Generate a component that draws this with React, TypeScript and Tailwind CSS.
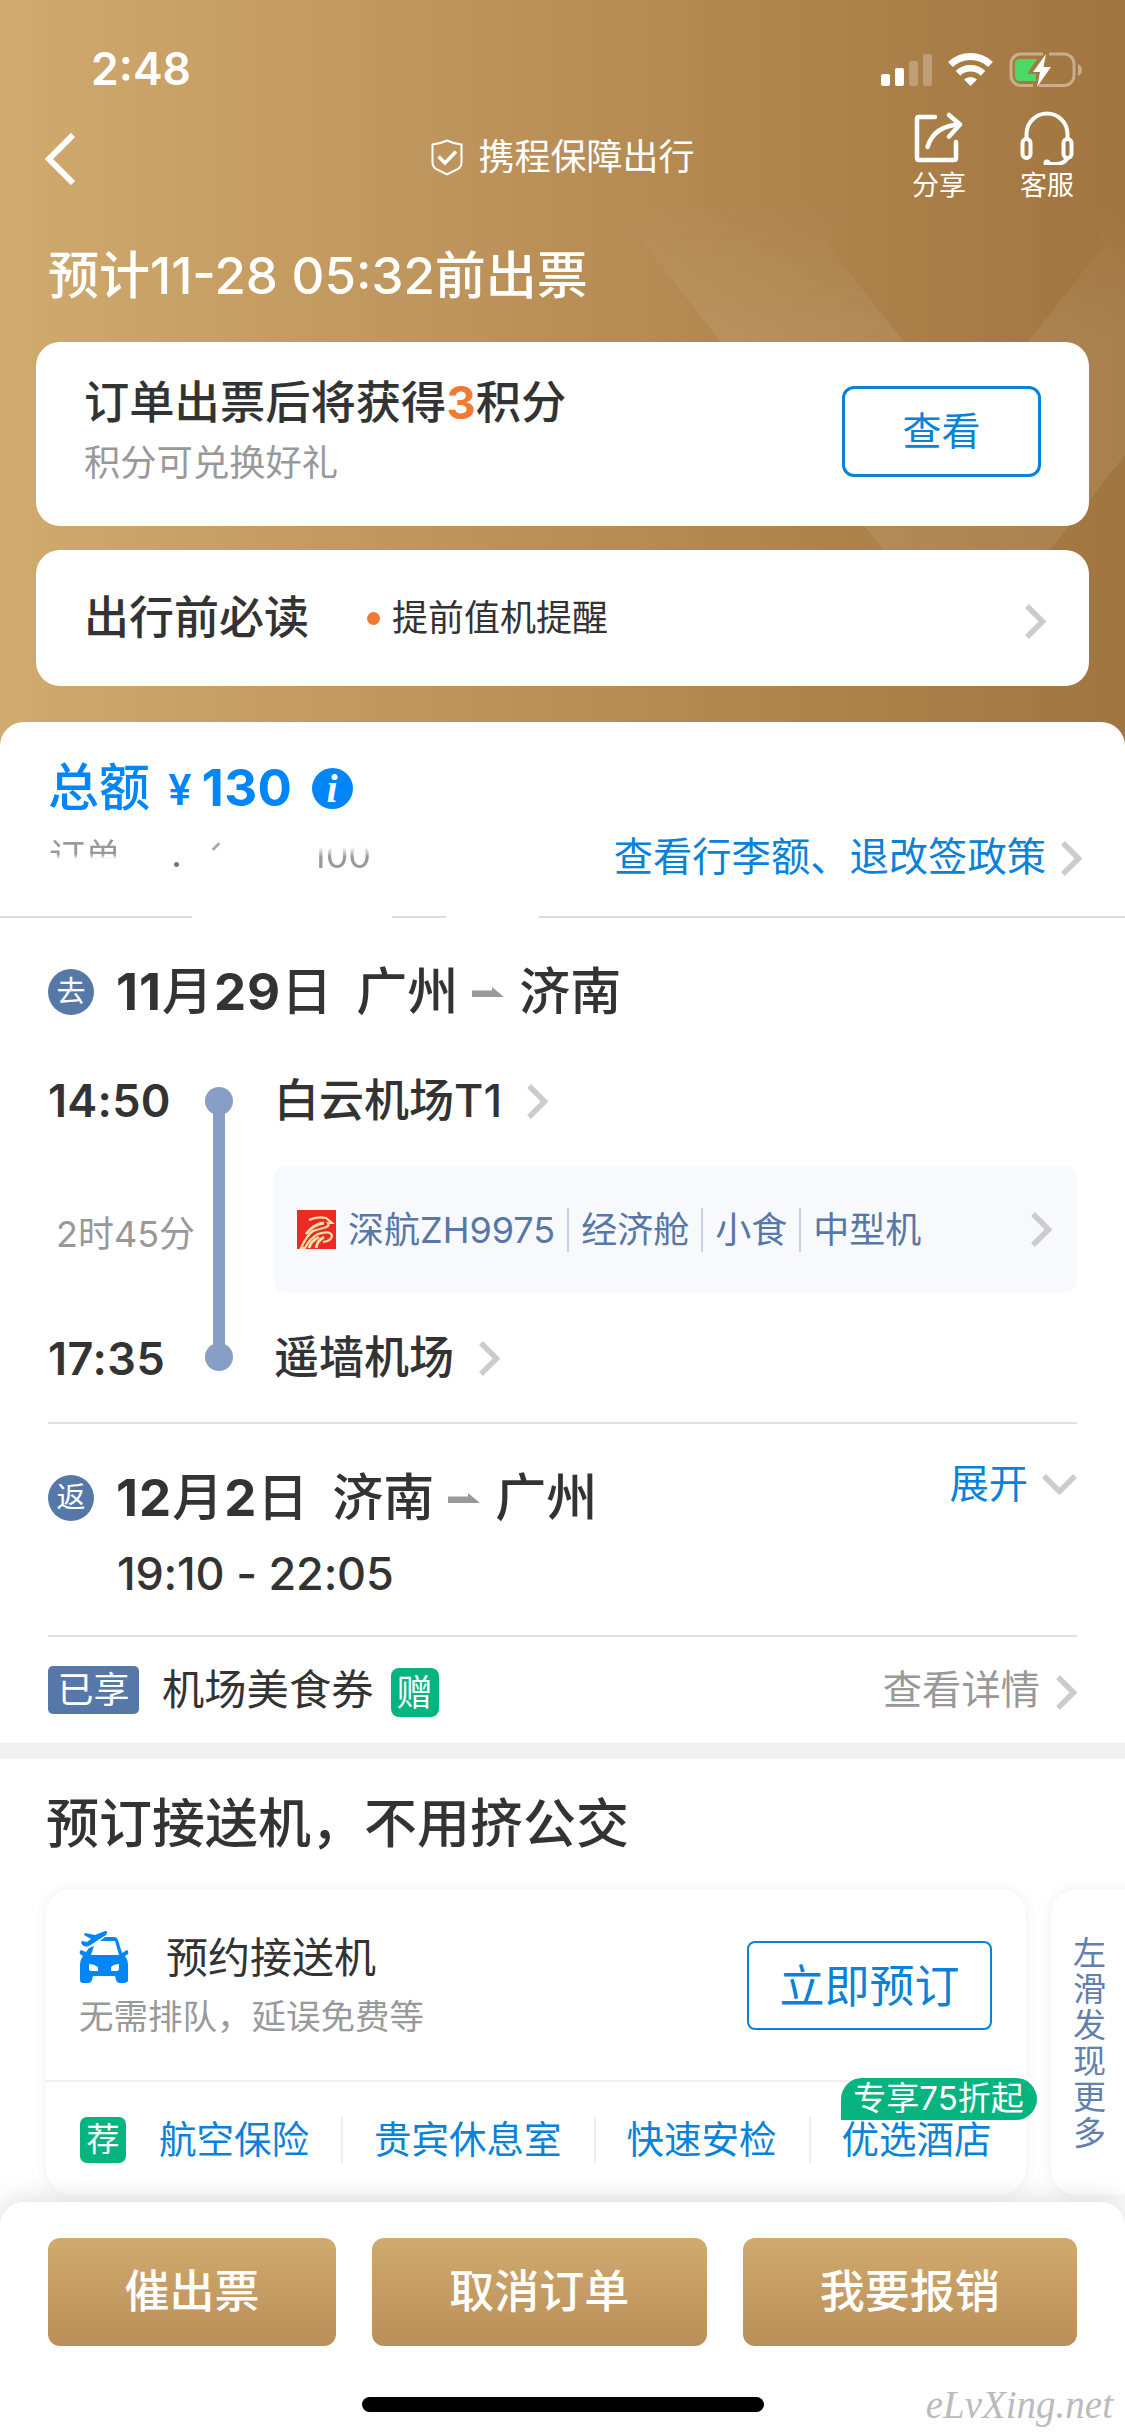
import { ReactNode } from 'react'
import clsx from 'clsx'

const Chevron = ({ className }: { className?: string }) => (
    <svg
        viewBox="0 0 21 35"
        className={clsx('h-[35px] w-[21px] shrink-0', className)}
        fill="none"
        stroke="#cccccc"
        strokeWidth="5.500"
    >
        <path d="M2 2L17.5 17.5L2 33" />
    </svg>
)

const RouteArrow = () => (
    <svg
        viewBox="0 0 32 10"
        className="h-[10px] w-[32px]"
        fill="#999999"
    >
        <path d="M0 3.5H20V0L32 10H0Z" />
    </svg>
)

const StatusBar = () => (
    <div className="flex h-[104px] items-start justify-between pt-[45px] pr-[42px] pl-[91px]">
        <span className="text-[44.500px] leading-[48px] font-semibold">2:48</span>
        <div className="flex items-center gap-[16px] pt-[7px]">
            <svg
                viewBox="0 0 51 34"
                className="h-[34px] w-[51px]"
                fill="white"
            >
                <rect x="0" y="21" width="9" height="12" rx="2" />
                <rect x="14" y="15" width="9" height="18" rx="2" />
                <rect x="28" y="8" width="9" height="25" rx="2" opacity="0.25" />
                <rect x="42" y="1" width="9" height="32" rx="2" opacity="0.25" />
            </svg>
            <svg
                viewBox="0 0 45 34"
                className="h-[34px] w-[45px]"
                fill="none"
                stroke="white"
                strokeWidth="7"
            >
                <path d="M2.5 11.5A29 29 0 0 1 42.500 11.500" />
                <path d="M10 20.300A18 18 0 0 1 35 20.300" strokeWidth="6.500" />
                <path
                    d="M22.500 33L16 26.500A9.500 9.500 0 0 1 29 26.500Z"
                    fill="white"
                    stroke="none"
                />
            </svg>
            <svg
                viewBox="0 0 74 36"
                className="h-[36px] w-[74px]"
                fill="none"
            >
                <path
                    d="M34 2H12A10 10 0 0 0 2 12V23A10 10 0 0 0 12 33.500H24M40 2H55A10 10 0 0 1 65 12V23A10 10 0 0 1 55 33.500H30"
                    stroke="white"
                    strokeOpacity="0.4"
                    strokeWidth="3"
                />
                <path
                    d="M69 12Q73 14 73 18T69 24Z"
                    fill="white"
                    fillOpacity="0.4"
                />
                <path
                    d="M11 7H28L18 22H27V29H11Q6 29 6 24V12Q6 7 11 7Z"
                    fill="#4cd964"
                />
                <path d="M37 2L24 20H31L28 35L42 15H34.500Z" fill="white" />
            </svg>
        </div>
    </div>
)

const NavBar = () => (
    <div className="flex h-[110px] items-start justify-between pr-[51px] pl-[44px]">
        <svg
            viewBox="0 0 32 52"
            className="mt-[29px] h-[52px] w-[32px]"
            fill="none"
            stroke="white"
            strokeWidth="6"
        >
            <path d="M29 2L5 26L29 50" />
        </svg>
        <div className="ml-[138px] flex h-[106px] items-center gap-[15px]">
            <svg
                viewBox="0 0 32 37"
                className="h-[37px] w-[32px]"
                fill="none"
                stroke="white"
                strokeWidth="2"
            >
                <path d="M16 1.500Q22 4.500 30.500 5.500V24Q30 28 27 30L16 35.500L5 30Q2 28 1.500 24V5.500Q10 4.500 16 1.500Z" />
                <path d="M7.500 17.500L14 24L25 12.500" strokeWidth="3.500" />
            </svg>
            <span className="text-[36px]">携程保障出行</span>
        </div>
        <div className="flex gap-[54px] pt-[7px] text-[27px] leading-[32px]">
            <div className="flex w-[54px] flex-col items-center gap-[5px]">
                <svg
                    viewBox="0 0 52 54"
                    className="h-[54px] w-[52px]"
                    fill="none"
                    stroke="white"
                    strokeWidth="4.500"
                    strokeLinecap="round"
                    strokeLinejoin="round"
                >
                    <path d="M22 6H6Q4 6 4 8V47Q4 49 6 49H41Q43 49 43 47V31" />
                    <path d="M14.500 36Q21 14.500 47 13.500M36 4L47 13.500L36 25.500" />
                </svg>
                <span>分享</span>
            </div>
            <div className="flex w-[54px] flex-col items-center gap-[5px]">
                <svg
                    viewBox="0 0 54 54"
                    className="h-[54px] w-[54px]"
                    fill="none"
                    stroke="white"
                    strokeWidth="4"
                    strokeLinecap="round"
                >
                    <path d="M6.500 28V23A20.500 20.500 0 0 1 47.500 23V28" />
                    <rect x="2.500" y="28" width="8" height="19" rx="4" />
                    <rect x="43.500" y="28" width="8" height="19" rx="4" />
                    <path d="M47.500 47Q44 53.500 34 53H28" />
                    <circle cx="27" cy="52" r="1.500" fill="white" />
                </svg>
                <span>客服</span>
            </div>
        </div>
    </div>
)

const OutlineButton = ({
    children,
    className
}: {
    children: ReactNode
    className?: string
}) => (
    <button
        className={clsx(
            'flex shrink-0 items-center justify-center border-[#0a82d8] text-[#0a82d8]',
            className
        )}
    >
        {children}
    </button>
)

const LegHeader = ({
    mark,
    date,
    from,
    to
}: {
    mark: string
    date: string[]
    from: string
    to: string
}) => (
    <div className="flex h-[60px] items-center text-[51px] leading-[60px] font-medium">
        <span className="mr-[22px] flex h-[46px] w-[46px] items-center justify-center rounded-full bg-[#5678a8] text-[29px] font-normal text-white">
            {mark}
        </span>
        <span className="mr-[23px] tracking-[1px] whitespace-nowrap">
            <b className="font-bold">{date[0]}</b>月
            <b className="font-bold">{date[1]}</b>日
        </span>
        <span className="mr-[14px]">{from}</span>
        <RouteArrow />
        <span className="ml-[15px]">{to}</span>
    </div>
)

const AirlineLogo = () => (
    <svg
        viewBox="0 0 39 39"
        className="h-[39px] w-[39px] shrink-0"
    >
        <rect width="39" height="39" fill="#ea2a23" />
        <path
            d="M12 10Q20 6 29 8L35 13L31 13Q33 17 26 18L16 21Q10 25 4 38H8Q13 28 21 24Q34 20 35 26Q34 31 26 32"
            fill="none"
            stroke="#f8dfa8"
            strokeWidth="2.200"
        />
        <path
            d="M27 13Q17 14 9 24M12 38Q14 31 22 27M19 38Q20 31 27 27"
            fill="none"
            stroke="#f8dfa8"
            strokeWidth="2.800"
        />
    </svg>
)

const CarIcon = () => (
    <svg
        viewBox="0 0 50 52"
        className="h-[52px] w-[50px]"
        fill="#0086f6"
    >
        <path
            fillRule="evenodd"
            d="M26 6H35Q38 6 39 9L43 22L48 19Q50 20 49 23L46 25Q49 29 49 33V50Q48 52 45 52H40Q38 52 37 49L36 45H14L13 49Q12 52 9 52H4Q1 52 1 49V33Q1 29 4 25L1 23Q0 20 2 19L7 21L10 17L15 15L12 24H40L36 10H21ZM10 33V38Q10 40 13 40H19V36Q15 33 10 33ZM40 33Q35 33 32 36V40H38Q40 40 40 37Z"
        />
        <path d="M6 2L16 4L26 0Q30 0 27 4L10 15Q5 17 2 12L3 10L8 11L12 8L5 4Z" />
    </svg>
)

const recommends = ['航空保险', '贵宾休息室', '快速安检', '优选酒店']

const flightInfo = ['深航ZH9975', '经济舱', '小食', '中型机']

const App = () => {
    return (
        <div className="flex h-[2436px] w-[1125px] flex-col overflow-hidden bg-[linear-gradient(to_right,#d0aa6e_0%,#b98f57_50%,#a0753f_100%)] font-[Inter,'Noto_Sans_CJK_SC',sans-serif] text-[#333333]">
            <header className="relative h-[722px] shrink-0 text-white">
                <svg
                    viewBox="0 0 1125 722"
                    className="absolute inset-0 h-[722px] w-[1125px]"
                >
                    <defs>
                        <linearGradient
                            id="fade"
                            gradientUnits="userSpaceOnUse"
                            x1="0"
                            y1="200"
                            x2="0"
                            y2="340"
                        >
                            <stop offset="0" stopColor="#fff" stopOpacity="0" />
                            <stop offset="1" stopColor="#fff" stopOpacity="0.08" />
                        </linearGradient>
                    </defs>
                    <path
                        d="M610 200H842L829 247L966 421L1104 245L1090 200H1125V455L966 656Z"
                        fill="url(#fade)"
                    />
                </svg>
                <div className="relative">
                    <StatusBar />
                    <NavBar />
                    <h1 className="flex h-[128px] items-center pb-[3px] pl-[48px] text-[51px] font-medium">
                        预计11-28 05:32前出票
                    </h1>
                    <div className="flex flex-col gap-[24px] px-[36px] text-[#333333]">
                        <section className="flex h-[184px] items-start justify-between rounded-[24px] bg-white pr-[48px] pl-[48px]">
                            <div className="pt-[31px]">
                                <h2 className="text-[45.300px] leading-[60px] font-medium">
                                    订单出票后将获得
                                    <b className="font-bold text-[#f27931]">3</b>
                                    积分
                                </h2>
                                <p className="text-[36.300px] leading-[60px] text-[#999999]">
                                    积分可兑换好礼
                                </p>
                            </div>
                            <OutlineButton className="mt-[44px] h-[91px] w-[199px] rounded-[12px] border-[3px] text-[39px]">
                                查看
                            </OutlineButton>
                        </section>
                        <section className="flex h-[136px] items-center rounded-[24px] bg-white pr-[43px] pl-[48px]">
                            <h2 className="text-[45px] font-medium">出行前必读</h2>
                            <span className="mr-[12px] ml-[58px] h-[13px] w-[13px] rounded-full bg-[#f27931]" />
                            <span className="text-[36px]">提前值机提醒</span>
                            <Chevron className="mt-[6px] ml-auto" />
                        </section>
                    </div>
                </div>
            </header>

            <main className="h-[1504px] shrink-0 overflow-hidden rounded-t-[24px] bg-white">
                <section className="h-[195px] pt-[36px]">
                    <div className="flex h-[60px] items-center pl-[48px] text-[51px] leading-[60px] font-medium text-[#0086f6]">
                        总额
                        <span className="mt-[4px] ml-[18px] text-[42px] font-semibold">
                            ¥
                        </span>
                        <span className="ml-[10px] tracking-[0.5px] font-bold">
                            130
                        </span>
                        <span className="ml-[19px] flex h-[41px] w-[41px] items-center justify-center rounded-full bg-[#0086f6] font-['Liberation_Serif',serif] text-[40px] leading-[41px] font-bold text-white italic">
                            i
                        </span>
                    </div>
                    <div className="flex h-[76px] items-start justify-between pr-[43px] pl-[49px]">
                        {/* order number, mostly rubbed out */}
                        <div className="flex text-[36px] leading-[40px] text-[#999999]">
                            <span className="mt-[19px] h-[40px] [mask-image:linear-gradient(black_17px,transparent_22px)]">
                                订单
                            </span>
                            <i className="mt-[44px] ml-[53px] h-[5px] w-[5px] rounded-full bg-[#777777]" />
                            <i className="mt-[27px] ml-[32px] h-[3px] w-[10px] -rotate-45 rounded-full bg-[#aaaaaa]" />
                            <span className="mt-[17px] ml-[90px] h-[40px] [mask-image:linear-gradient(transparent_12px,black_22px)]">
                                100
                            </span>
                        </div>
                        <div className="flex items-center pt-[14px] text-[39.300px] leading-[50px] text-[#0a82d8]">
                            查看行李额、退改签政策
                            <Chevron className="mt-[2px] ml-[15px]" />
                        </div>
                    </div>
                    <div className="mt-[22px] flex h-[2px]">
                        <i className="w-[192px] bg-[#dddddd]" />
                        <i className="ml-[200px] w-[54px] bg-[#dddddd]" />
                        <i className="ml-[93px] flex-1 bg-[#dddddd]" />
                    </div>
                </section>

                <div className="px-[48px]">
                    <section className="h-[507px] border-b-2 border-[#e0e0e0] pt-[45px]">
                        <LegHeader
                            mark="去"
                            date={['11', '29']}
                            from="广州"
                            to="济南"
                        />
                        <div className="mt-[49px] flex h-[318px]">
                            <div className="flex w-[144px] flex-col justify-between text-[45px] leading-[60px] font-semibold">
                                <span className="tracking-[0.3px]">14:50</span>
                                <span className="mt-[7px] ml-[8px] text-[36px] font-normal whitespace-nowrap text-[#999999]">
                                    2时45分
                                </span>
                                <span className="tracking-[0.5px]">17:35</span>
                            </div>
                            <div className="mt-[16px] ml-[13px] flex h-[284px] w-[28px] flex-col items-center">
                                <i className="h-[28px] w-[28px] shrink-0 rounded-full bg-[#879fc6]" />
                                <i className="-my-[4px] w-[12px] flex-1 bg-[#879fc6]" />
                                <i className="h-[28px] w-[28px] shrink-0 rounded-full bg-[#879fc6]" />
                            </div>
                            <div className="ml-[41px] flex flex-1 flex-col text-[45px] leading-[60px] font-medium">
                                <div className="flex items-center gap-[25px]">
                                    白云机场T1
                                    <Chevron />
                                </div>
                                <div className="mt-[35px] flex h-[127px] items-center rounded-[12px] bg-[#f8f9fd] pr-[25px] pl-[23px] text-[36px] font-normal text-[#5678a8]">
                                    <AirlineLogo />
                                    {flightInfo.map((item, index) => (
                                        <span
                                            key={item}
                                            className={clsx(
                                                'flex h-[44px] items-center whitespace-nowrap',
                                                index > 0 &&
                                                    'border-l-2 border-[#c9d3e3]',
                                                'px-[12px]'
                                            )}
                                        >
                                            {item}
                                        </span>
                                    ))}
                                    <Chevron className="ml-auto" />
                                </div>
                                <div className="mt-[35px] flex items-center gap-[25px]">
                                    遥墙机场
                                    <Chevron />
                                </div>
                            </div>
                        </div>
                    </section>

                    <section className="flex h-[213px] items-start justify-between border-b-2 border-[#e0e0e0]">
                        <div className="pt-[44px]">
                            <LegHeader
                                mark="返"
                                date={['12', '2']}
                                from="济南"
                                to="广州"
                            />
                            <p className="mt-[16px] ml-[69px] text-[45px] leading-[60px] font-medium tracking-[-0.200px]">
                                19:10 - 22:05
                            </p>
                        </div>
                        <div className="flex items-center gap-[14px] pt-[34px] text-[39.300px] leading-[52px] text-[#0a82d8]">
                            展开
                            <Chevron className="mx-[7px] rotate-90" />
                        </div>
                    </section>

                    <section className="flex h-[106px] items-center">
                        <span className="flex h-[48px] w-[91px] items-center justify-center rounded-[5px] bg-[#5678a8] text-[36px] text-white">
                            已享
                        </span>
                        <span className="ml-[23px] text-[42.300px]">机场美食券</span>
                        <span className="mt-[5px] ml-[17px] flex h-[49px] w-[48px] items-center justify-center rounded-[8px] bg-[#06b47f] text-[36px] text-white">
                            赠
                        </span>
                        <span className="ml-auto text-[39.300px] text-[#999999]">
                            查看详情
                        </span>
                        <Chevron className="mt-[4px] ml-[16px]" />
                    </section>
                </div>

                <div className="h-[16px] bg-[#f0f0f0]" />

                <section className="pt-[33px] pl-[46px]">
                    <h2 className="text-[53px] leading-[64px] font-medium">
                        预订接送机，不用挤公交
                    </h2>
                    <div className="mt-[33px] flex h-[306px] gap-[25px]">
                        <div className="flex w-[980px] shrink-0 flex-col rounded-[26px] bg-white shadow-[0_0_14px_rgba(0,0,0,0.07)]">
                            <div className="flex h-[193px] items-start justify-between border-b-2 border-[#f0f0f0] pr-[34px] pl-[33px]">
                                <div className="pt-[38px]">
                                    <div className="flex h-[60px] items-center gap-[37px] text-[42px]">
                                        <CarIcon />
                                        预约接送机
                                    </div>
                                    <p className="text-[34.500px] leading-[60px] text-[#999999]">
                                        无需排队，延误免费等
                                    </p>
                                </div>
                                <OutlineButton className="mt-[52px] h-[89px] w-[245px] rounded-[8px] border-2 pt-[2px] text-[45px]">
                                    立即预订
                                </OutlineButton>
                            </div>
                            <div className="flex h-[113px] items-center pt-[3px] pl-[34px] text-[37.500px] text-[#0a82d8]">
                                <span className="flex h-[46px] w-[46px] items-center justify-center rounded-[7px] bg-[#06b47f] text-[33px] text-white">
                                    荐
                                </span>
                                {recommends.map((item, index) => (
                                    <span
                                        key={item}
                                        className={clsx(
                                            'relative flex h-[46px] items-center whitespace-nowrap',
                                            index === 0 ? 'pl-[33px]' : 'pl-[31px]',
                                            index < recommends.length - 1 &&
                                                'border-r-2 border-[#eeeeee] pr-[32px]'
                                        )}
                                    >
                                        {item}
                                        {item === '优选酒店' && (
                                            <span className="absolute -top-[39px] left-[30px] flex h-[42px] w-[196px] items-center justify-center rounded-full rounded-bl-none bg-[#06b47f] text-[33px] text-white">
                                                专享75折起
                                            </span>
                                        )}
                                    </span>
                                ))}
                            </div>
                        </div>
                        <div className="w-[120px] shrink-0 rounded-[26px] bg-white pt-[46px] pl-[22px] shadow-[0_0_14px_rgba(0,0,0,0.07)]">
                            <p className="w-[33px] text-[33px] leading-[36px] break-all text-[#6280ae]">
                                左滑发现更多
                            </p>
                        </div>
                    </div>
                </section>
            </main>

            <footer className="relative -mt-[24px] h-[234px] shrink-0 rounded-t-[24px] bg-white shadow-[0_0_30px_rgba(0,0,0,0.16)]">
                <div className="flex gap-[36px] px-[48px] pt-[36px] text-[45px] font-medium text-white">
                    <button className="h-[108px] w-[288px] rounded-[12px] bg-linear-to-b from-[#d0aa6e] to-[#ba8f59]">
                        催出票
                    </button>
                    <button className="h-[108px] flex-1 rounded-[12px] bg-linear-to-b from-[#d0aa6e] to-[#ba8f59]">
                        取消订单
                    </button>
                    <button className="h-[108px] flex-1 rounded-[12px] bg-linear-to-b from-[#d0aa6e] to-[#ba8f59]">
                        我要报销
                    </button>
                </div>
                <div className="mx-auto mt-[51px] h-[15px] w-[402px] rounded-full bg-black" />
                <span className="absolute right-[12px] bottom-[9px] font-['Liberation_Serif',serif] text-[39px] leading-[44px] text-[#bbbbbb] italic">
                    eLvXing.net
                </span>
            </footer>
        </div>
    )
}

export default App
